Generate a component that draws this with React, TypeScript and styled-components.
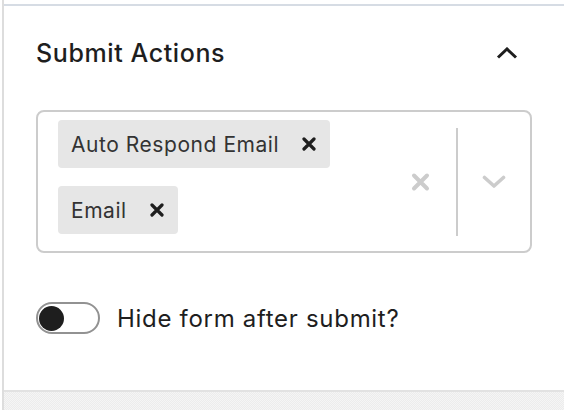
import React from "react";
import styled, { createGlobalStyle } from "styled-components";

const Global = createGlobalStyle`
  html, body {
    margin: 0;
    padding: 0;
    background: #fff;
  }
  body {
    font-family: Inter, "Noto Sans", sans-serif;
    color: #1e1e1e;
  }
`;

const Frame = styled.div`
  margin-left: 2px;
  border-left: 2px solid #dddddd;
  height: 410px;
  display: flex;
  flex-direction: column;
  padding-top: 4px;
  box-sizing: border-box;
`;

const Panel = styled.section`
  border-top: 2px solid #d6dce4;
  border-bottom: 2px solid #e2e2e2;
  background: #fff;
`;

const Header = styled.div`
  height: 94px;
  display: flex;
  align-items: center;
  justify-content: space-between;
  padding: 0 46px 0 32px;
`;

const Title = styled.h2`
  margin: 0;
  font-size: 25px;
  line-height: 30px;
  font-weight: 500;
  letter-spacing: 0.6px;
  color: #1e1e1e;
`;

const Body = styled.div`
  padding: 10px 32px 56px 32px;
  display: flex;
  flex-direction: column;
  gap: 49px;
`;

const Select = styled.div`
  display: flex;
  border: 2px solid #cccccc;
  border-radius: 8px;
  min-height: 139px;
`;

const Values = styled.div`
  flex: 1;
  display: flex;
  flex-wrap: wrap;
  align-content: flex-start;
  row-gap: 18px;
  column-gap: 8px;
  padding: 8px 0 17px 20px;
`;

const Tag = styled.div`
  display: flex;
  align-items: center;
  height: 48px;
  background: #e6e6e6;
  border-radius: 4px;
  padding: 0 14px 0 13px;
  gap: 23px;
  font-size: 21px;
  letter-spacing: 0.55px;
  color: #333333;
`;

const Indicators = styled.div`
  display: flex;
  align-items: stretch;
`;

const Indicator = styled.div<{ $pl: number; $pr: number }>`
  display: flex;
  align-items: center;
  padding: 0 ${(p) => p.$pr}px 0 ${(p) => p.$pl}px;
  color: #cccccc;
`;

const Separator = styled.span`
  width: 2px;
  background: #cccccc;
  margin: 16px 0 15px;
`;

const ToggleRow = styled.label`
  display: flex;
  align-items: center;
  gap: 17px;
  height: 32px;
`;

const Track = styled.span`
  box-sizing: border-box;
  width: 64px;
  height: 32px;
  border: 2px solid #929292;
  border-radius: 16px;
  display: flex;
  align-items: center;
  padding-left: 1px;
`;

const Knob = styled.span`
  width: 25px;
  height: 25px;
  border-radius: 50%;
  background: #1e1e1e;
`;

const Label = styled.span`
  font-size: 24px;
  letter-spacing: 0.7px;
  color: #1e1e1e;
`;

const Rest = styled.div`
  flex: 1;
  background-color: #f1f1f1;
  background-image: repeating-conic-gradient(#ececec 0 25%, #f5f5f5 0 50%);
  background-size: 2px 2px;
`;

const TagX = () => (
  <svg width="14" height="14" viewBox="0 0 14 14">
    <path d="M2 2L12 12M12 2L2 12" stroke="#1e1e1e" strokeWidth="3.2" strokeLinecap="round" />
  </svg>
);

const MultiTag = ({ label }: { label: string }) => (
  <Tag>
    <span>{label}</span>
    <TagX />
  </Tag>
);

export default function App() {
  return (
    <>
      <Global />
      <Frame>
        <Panel>
          <Header>
            <Title>Submit Actions</Title>
            <svg width="22" height="12" viewBox="0 0 22 12">
              <path d="M2 10.5L11 2L20 10.5" fill="none" stroke="#1e1e1e" strokeWidth="3" />
            </svg>
          </Header>
          <Body>
            <Select>
              <Values>
                <MultiTag label="Auto Respond Email" />
                <MultiTag label="Email" />
              </Values>
              <Indicators>
                <Indicator $pl={16} $pr={26}>
                  <svg width="19" height="20" viewBox="0 0 19 20">
                    <path d="M3 3.5L16 16.5M16 3.5L3 16.5" stroke="currentColor" strokeWidth="4" strokeLinecap="round" />
                  </svg>
                </Indicator>
                <Separator />
                <Indicator $pl={24} $pr={24}>
                  <svg width="24" height="14" viewBox="0 0 24 14">
                    <path d="M2.5 2.5L12 11L21.5 2.5" fill="none" stroke="currentColor" strokeWidth="3.6" strokeLinecap="round" strokeLinejoin="round" />
                  </svg>
                </Indicator>
              </Indicators>
            </Select>
            <ToggleRow>
              <Track>
                <Knob />
              </Track>
              <Label>Hide form after submit?</Label>
            </ToggleRow>
          </Body>
        </Panel>
        <Rest />
      </Frame>
    </>
  );
}
